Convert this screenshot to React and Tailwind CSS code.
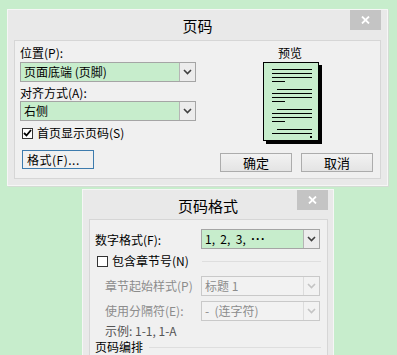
import React from "react";

const font = { fontFamily: '"Noto Sans CJK SC", "Liberation Sans", sans-serif' };

function Chevron({ light }) {
  return (
    <svg width="9" height="6" viewBox="0 0 9 6">
      <path d="M1 1 L4.5 4.5 L8 1" fill="none" stroke={light ? "#c4c4c4" : "#404040"} strokeWidth="1.6" />
    </svg>
  );
}

function Select({ value, disabled, className = "" }) {
  return (
    <div
      className={`flex h-[20px] border ${
        disabled ? "border-[#c9c9c9] bg-[#f2f2f2] text-[#8c8c8c]" : "border-[#a5a5a5] bg-[#c7edcc] text-black"
      } ${className}`}
    >
      <div className="flex flex-1 items-center overflow-hidden px-[3px] leading-none whitespace-pre">{value}</div>
      <div
        className={`flex w-[16px] items-center justify-center border-l ${
          disabled ? "border-[#dcdcdc] bg-[#f2f2f2]" : "border-[#b5b5b5] bg-[#ececec]"
        }`}
      >
        <Chevron light={disabled} />
      </div>
    </div>
  );
}

function CloseButton() {
  return (
    <div className="flex h-[20px] w-[31px] items-center justify-center bg-[#c4c4c4]">
      <svg width="9" height="8" viewBox="0 0 9 8">
        <path d="M1 0.5 L8 7.5 M8 0.5 L1 7.5" stroke="#fff" strokeWidth="1.8" />
      </svg>
    </div>
  );
}

function PagePreview() {
  const full = [7, 11, 15, 31, 35, 51, 55, 71];
  const indent = [27, 47, 67];
  const short = [19, 39, 59];
  return (
    <svg width="60" height="83" viewBox="0 0 60 83">
      <rect x="3" y="3" width="56" height="79" fill="#000" />
      <rect x="0.5" y="0.5" width="55" height="78" fill="#c7edcc" stroke="#000" />
      {full.map((y) => (
        <line key={"f" + y} x1="9" x2="49" y1={y + 0.5} y2={y + 0.5} stroke="#000" />
      ))}
      {indent.map((y) => (
        <line key={"i" + y} x1="14" x2="49" y1={y + 0.5} y2={y + 0.5} stroke="#000" />
      ))}
      {short.map((y) => (
        <line key={"s" + y} x1="9" x2="22" y1={y + 0.5} y2={y + 0.5} stroke="#000" />
      ))}
      <rect x="47" y="74" width="2" height="2" fill="#000" />
    </svg>
  );
}

export default function App() {
  return (
    <div className="relative h-[355px] w-[397px] overflow-hidden bg-[#c7edcc] text-[12px] text-black" style={font}>
      {/* Page number dialog */}
      <div className="ml-[7px] mt-[9px] h-[177px] w-[381px] border border-[#f6f6f6] bg-[#e9e9e9] shadow-[1px_1px_0_#d4dcd4]">
        <div className="flex h-[30px] items-start pr-[6px]">
          <div className="w-[37px]" />
          <div className="flex h-[30px] flex-1 items-center justify-center text-[15px] leading-none">页码</div>
          <CloseButton />
        </div>
        <div className="ml-[6px] flex h-[139px] w-[367px] border border-[#d6d6d6] bg-[#f0f0f0]">
          <div className="flex w-[181px] flex-col pl-[5px] pt-[4px]">
            <div className="flex h-[16px] items-center leading-none">位置(P):</div>
            <Select value="页面底端 (页脚)" className="mt-[1px] w-[176px]" />
            <div className="mt-[3px] flex h-[16px] items-center leading-none">对齐方式(A):</div>
            <Select value="右侧" className="w-[176px]" />
            <div className="mt-[4px] flex h-[16px] items-center gap-[4px] pl-[2px] leading-none">
              <div className="flex h-[11px] w-[11px] items-center justify-center border border-[#333] bg-white">
                <svg width="9" height="8" viewBox="0 0 9 8">
                  <path d="M1 4 L3.5 6.5 L8 1" fill="none" stroke="#000" strokeWidth="1.8" />
                </svg>
              </div>
              <span>首页显示页码(S)</span>
            </div>
            <div className="ml-[2px] mt-[9px] flex h-[19px] w-[72px] items-center border border-[#3d7bad] bg-[#f0f0f0] pl-[4px] leading-none tracking-[0.5px]">
              格式(F)...
            </div>
          </div>
          <div className="ml-[24px] flex w-[153px] flex-col pt-[4px]">
            <div className="ml-[58px] flex h-[16px] w-[24px] items-center justify-center leading-none">预览</div>
            <div className="ml-[43px] mt-[1px]">
              <PagePreview />
            </div>
            <div className="mt-[8px] flex gap-[9px]">
              <div className="flex h-[19px] w-[72px] items-center justify-center border border-[#acacac] bg-gradient-to-b from-[#f2f2f2] to-[#e4e4e4] text-[13px] leading-none">
                确定
              </div>
              <div className="flex h-[19px] w-[72px] items-center justify-center border border-[#acacac] bg-gradient-to-b from-[#f2f2f2] to-[#e4e4e4] text-[13px] leading-none">
                取消
              </div>
            </div>
          </div>
        </div>
      </div>

      {/* Page number format dialog */}
      <div className="ml-[82px] mt-[3px] h-[180px] w-[252px] border border-[#f6f6f6] bg-[#e9e9e9]">
        <div className="flex h-[29px] items-start pr-[5px]">
          <div className="w-[36px]" />
          <div className="flex h-[30px] flex-1 items-center justify-center text-[15px] leading-none">页码格式</div>
          <CloseButton />
        </div>
        <div className="ml-[6px] flex h-[150px] w-[239px] flex-col border border-[#d6d6d6] bg-[#f0f0f0] pl-[5px] pt-[9px]">
          <div className="flex items-center">
            <div className="w-[106px] pt-[2px] leading-none">数字格式(F):</div>
            <Select
              value={
                <>
                  {"1,  2,  3,  "}
                  <span className="font-['Liberation_Sans'] font-bold tracking-[1px]">{"\u00b7\u00b7\u00b7"}</span>
                </>
              }
              className="w-[119px]"
            />
          </div>
          <div className="mt-[6px] flex h-[12px] items-center">
            <div className="flex items-center gap-[4px] pl-[2px] leading-none">
              <div className="h-[11px] w-[11px] border border-[#333] bg-white" />
              <span>包含章节号(N)</span>
            </div>
            <div className="ml-[13px] mr-[6px] h-px flex-1 bg-[#dedede]" />
          </div>
          <div className="mt-[9px] flex items-center text-[#8c8c8c]">
            <div className="w-[106px] pl-[10px] leading-none">章节起始样式(P)</div>
            <Select value="标题 1" disabled className="w-[119px]" />
          </div>
          <div className="mt-[5px] flex items-center text-[#8c8c8c]">
            <div className="w-[106px] pl-[10px] leading-none">使用分隔符(E):</div>
            <Select value="-  (连字符)" disabled className="w-[119px]" />
          </div>
          <div className="mt-[3px] flex h-[16px] items-center pl-[10px] leading-none text-[#555]">示例:  1-1, 1-A</div>
          <div className="mt-[3px] flex h-[16px] items-center leading-none">
            <span>页码编排</span>
            <div className="ml-[6px] mr-[6px] h-px flex-1 bg-[#dedede]" />
          </div>
          <div className="mt-[2px] flex items-center gap-[4px] pl-[12px] leading-none">
            <div className="h-[11px] w-[11px] rounded-full border border-[#555] bg-white" />
            <span>续前节(C)</span>
          </div>
        </div>
      </div>
    </div>
  );
}
